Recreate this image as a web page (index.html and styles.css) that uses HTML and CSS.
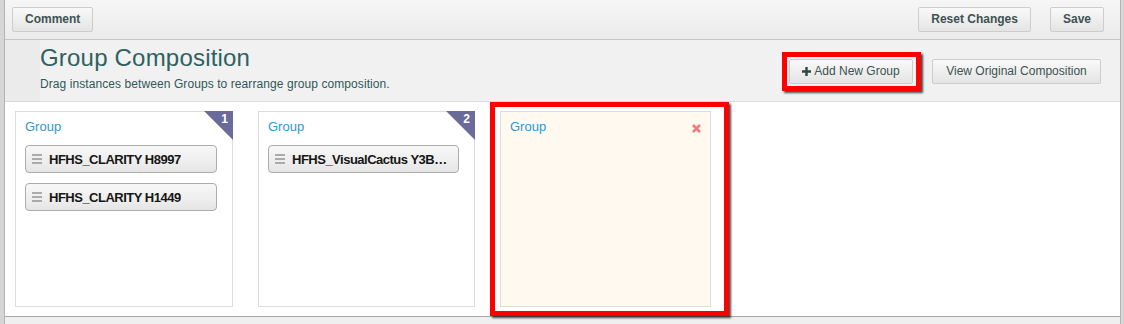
FILE: index.html
```html
<!DOCTYPE html>
<html lang="en">
<head>
    <meta charset="UTF-8">
    <title>Group Composition</title>
    <link rel="stylesheet" href="styles.css">
</head>
<body>
    <div class="panel">
        <div class="toolbar">
            <button class="btn btn-strong">Comment</button>
            <div class="toolbar-right">
                <button class="btn btn-strong">Reset Changes</button>
                <button class="btn btn-strong">Save</button>
            </div>
        </div>

        <div class="page-head">
            <div class="titles">
                <h1>Group Composition</h1>
                <p>Drag instances between Groups to rearrange group composition.</p>
            </div>
            <div class="head-actions">
                <button class="btn btn-add callout callout-add">
                    <svg width="9" height="9" viewBox="0 0 9 9"><path d="M3.3 0h2.4v3.3H9v2.4H5.7V9H3.3V5.7H0V3.3h3.3z" fill="#2f4646"/></svg>
                    Add New Group
                </button>
                <button class="btn btn-view">View Original Composition</button>
            </div>
        </div>

        <div class="groups">
            <div class="group">
                <div class="group-title">Group</div>
                <div class="badge"><span>1</span></div>
                <div class="item"><span class="handle"></span><span class="item-name">HFHS_CLARITY H8997</span></div>
                <div class="item"><span class="handle"></span><span class="item-name">HFHS_CLARITY H1449</span></div>
            </div>
            <div class="group group-narrow">
                <div class="group-title">Group</div>
                <div class="badge"><span>2</span></div>
                <div class="item"><span class="handle"></span><span class="item-name">HFHS_VisualCactus Y3B1457</span></div>
            </div>
            <div class="group group-new callout callout-group">
                <div class="group-title">Group</div>
                <svg class="remove" width="9" height="9" viewBox="0 0 9 9"><path d="M1 1l7 7M8 1L1 8" stroke="#f27a7a" stroke-width="2.6"/></svg>
            </div>
        </div>

        <div class="footer"></div>
    </div>
</body>
</html>
```

FILE: styles.css
```css
body {
    margin: 0;
    padding: 0 3px 0 4px;
    height: 324px;
    overflow: hidden;
    background-color: #d6d6d6;
    font-family: "Liberation Sans", Arial, sans-serif;
    font-size: 12px;
}

.panel {
    border-left: 1px solid #b3b3b3;
    border-right: 1px solid #b3b3b3;
    background-color: #efefef;
    height: 324px;
}

/* Top toolbar */
.toolbar {
    display: flex;
    justify-content: space-between;
    height: 32px;
    padding: 7px 16px 0 7px;
    background: linear-gradient(#f6f6f6, #ebebeb);
    border-bottom: 1px solid #c8c8c8;
}

.toolbar-right {
    display: flex;
    gap: 19px;
}

.btn {
    height: 25px;
    padding: 0 12px;
    border: 1px solid #cdcdcd;
    border-radius: 2px;
    background: linear-gradient(#f9f9f9, #e4e4e4);
    color: #3d5252;
    font-family: inherit;
    font-size: 12px;
    line-height: 23px;
    cursor: pointer;
}

.btn-strong {
    font-weight: bold;
}

.btn-add {
    display: flex;
    align-items: center;
    justify-content: center;
    gap: 3px;
    width: 124px;
}

.btn-view {
    width: 169px;
}

/* Page header */
.page-head {
    display: flex;
    justify-content: space-between;
    height: 58px;
    padding: 3px 19px 0 35px;
    background: linear-gradient(to right, #ebebeb 35px, #f1f1f1 35px);
    border-bottom: 1px solid #dadada;
}

.page-head h1 {
    margin: 0;
    font-size: 24px;
    font-weight: normal;
    line-height: 29px;
    letter-spacing: 0.2px;
    color: #2e6161;
}

.page-head p {
    margin: 4px 0 0;
    line-height: 16px;
    letter-spacing: 0.08px;
    color: #2f5858;
}

.head-actions {
    display: flex;
    gap: 19px;
    margin-top: 16px;
}

/* Groups */
.groups {
    display: flex;
    gap: 25px;
    height: 196px;
    padding: 9px 10px;
    background-color: #fff;
    border-bottom: 1px solid #a9a9a9;
}

.group {
    position: relative;
    width: 218px;
    box-sizing: border-box;
    padding: 7px 9px 0;
    border: 1px solid #dcdcdc;
    background-color: #fff;
}

.group-narrow {
    width: 217px;
}

.group-new {
    width: 211px;
    background-color: #fff9ef;
}

.group-title {
    margin-bottom: 10px;
    font-size: 13px;
    line-height: 16px;
    color: #3097cd;
}

.badge {
    position: absolute;
    top: -1px;
    right: -1px;
    width: 0;
    height: 0;
    border-top: 29px solid #6a6a9b;
    border-left: 29px solid transparent;
}

.badge span {
    position: absolute;
    top: -28px;
    right: 5px;
    color: #fff;
    font-weight: bold;
    font-size: 12px;
}

.remove {
    position: absolute;
    top: 12px;
    right: 9px;
}

.item {
    display: flex;
    align-items: center;
    gap: 7px;
    width: 192px;
    height: 28px;
    box-sizing: border-box;
    margin-bottom: 10px;
    padding: 0 8px 0 6px;
    border: 1px solid #acacac;
    border-radius: 4px;
    background: linear-gradient(#f7f7f7, #ececec 70%, #e4e4e4);
}

.group-narrow .item {
    width: 191px;
}

.handle {
    flex: none;
    width: 10px;
    height: 10px;
    background: linear-gradient(#ababab 2px, transparent 2px, transparent 4px, #ababab 4px, #ababab 6px, transparent 6px, transparent 8px, #ababab 8px);
}

.item-name {
    overflow: hidden;
    white-space: nowrap;
    text-overflow: ellipsis;
    font-weight: bold;
    font-size: 13px;
    letter-spacing: -0.5px;
    color: #161616;
}

.footer {
    height: 8px;
    background-color: #efefef;
}

/* Red annotation boxes */
.callout {
    position: relative;
}

.callout::after {
    content: "";
    position: absolute;
    border: 5px solid #f00;
    box-shadow: 2px 2px 2px rgba(0, 0, 0, 0.7);
    pointer-events: none;
}

.callout-add::after {
    top: -8px;
    left: -8px;
    right: -9px;
    bottom: -8px;
}

.callout-group::after {
    top: -10px;
    left: -11px;
    right: -19px;
    bottom: -10px;
}
```
